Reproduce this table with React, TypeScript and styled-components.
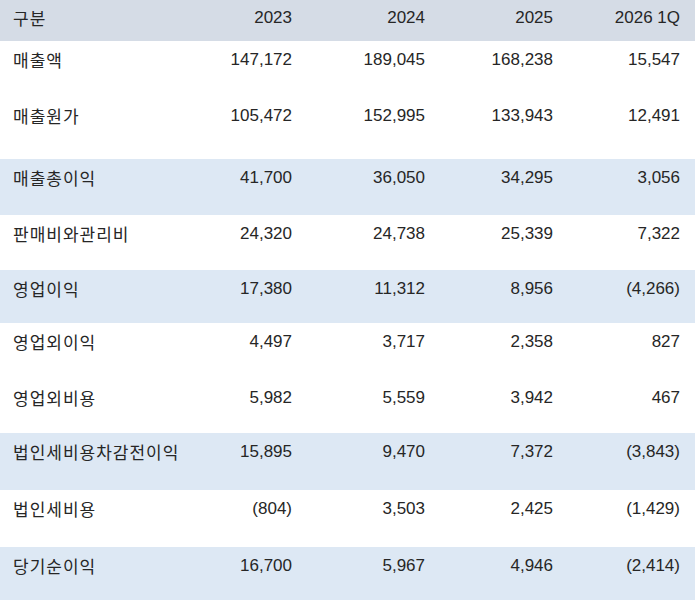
import React from "react";
import styled, { createGlobalStyle } from "styled-components";

const Global = createGlobalStyle`
  html, body { margin: 0; padding: 0; background: #ffffff; }
  body { font-family: "Liberation Sans", "Noto Sans CJK KR", sans-serif; }
`;

const Table = styled.div`
  width: 695px;
  display: flex;
  flex-direction: column;
  color: #262626;
  font-size: 16.5px;
`;

const Row = styled.div<{ $h: number; $tone: "head" | "hl" | "plain" }>`
  display: grid;
  grid-template-columns: 179px 128px 133px 128px 127px;
  height: ${(p) => p.$h}px;
  box-sizing: border-box;
  padding-top: ${(p) => (p.$tone === "head" ? 8 : 9)}px;
  background: ${(p) =>
    p.$tone === "head" ? "#d5dce6" : p.$tone === "hl" ? "#dde8f4" : "#ffffff"};
`;

const Label = styled.div`
  padding-left: 13px;
  line-height: 20px;
  white-space: nowrap;
  font-family: "Noto Sans CJK KR", "Liberation Sans", sans-serif;
  font-size: 17px;
  font-weight: 400;
  letter-spacing: 1px;
`;

const Num = styled.div`
  text-align: right;
  padding-right: 15px;
  line-height: 20px;
  font-size: 17px;
  white-space: nowrap;
`;

type R = { label: string; v: string[]; h: number; hl?: boolean };

const rows: R[] = [
  { label: "매출액", v: ["147,172", "189,045", "168,238", "15,547"], h: 56 },
  { label: "매출원가", v: ["105,472", "152,995", "133,943", "12,491"], h: 62 },
  { label: "매출총이익", v: ["41,700", "36,050", "34,295", "3,056"], h: 56, hl: true },
  { label: "판매비와관리비", v: ["24,320", "24,738", "25,339", "7,322"], h: 55 },
  { label: "영업이익", v: ["17,380", "11,312", "8,956", "(4,266)"], h: 53, hl: true },
  { label: "영업외이익", v: ["4,497", "3,717", "2,358", "827"], h: 56 },
  { label: "영업외비용", v: ["5,982", "5,559", "3,942", "467"], h: 54 },
  { label: "법인세비용차감전이익", v: ["15,895", "9,470", "7,372", "(3,843)"], h: 57, hl: true },
  { label: "법인세비용", v: ["(804)", "3,503", "2,425", "(1,429)"], h: 57 },
  { label: "당기순이익", v: ["16,700", "5,967", "4,946", "(2,414)"], h: 56, hl: true },
];

export default function App() {
  return (
    <>
      <Global />
      <Table>
        <Row $h={41} $tone="head">
          <Label>구분</Label>
          <Num>2023</Num>
          <Num>2024</Num>
          <Num>2025</Num>
          <Num>2026 1Q</Num>
        </Row>
        {rows.map((r) => (
          <Row key={r.label} $h={r.h} $tone={r.hl ? "hl" : "plain"}>
            <Label>{r.label}</Label>
            {r.v.map((x, i) => (
              <Num key={i}>{x}</Num>
            ))}
          </Row>
        ))}
      </Table>
    </>
  );
}
